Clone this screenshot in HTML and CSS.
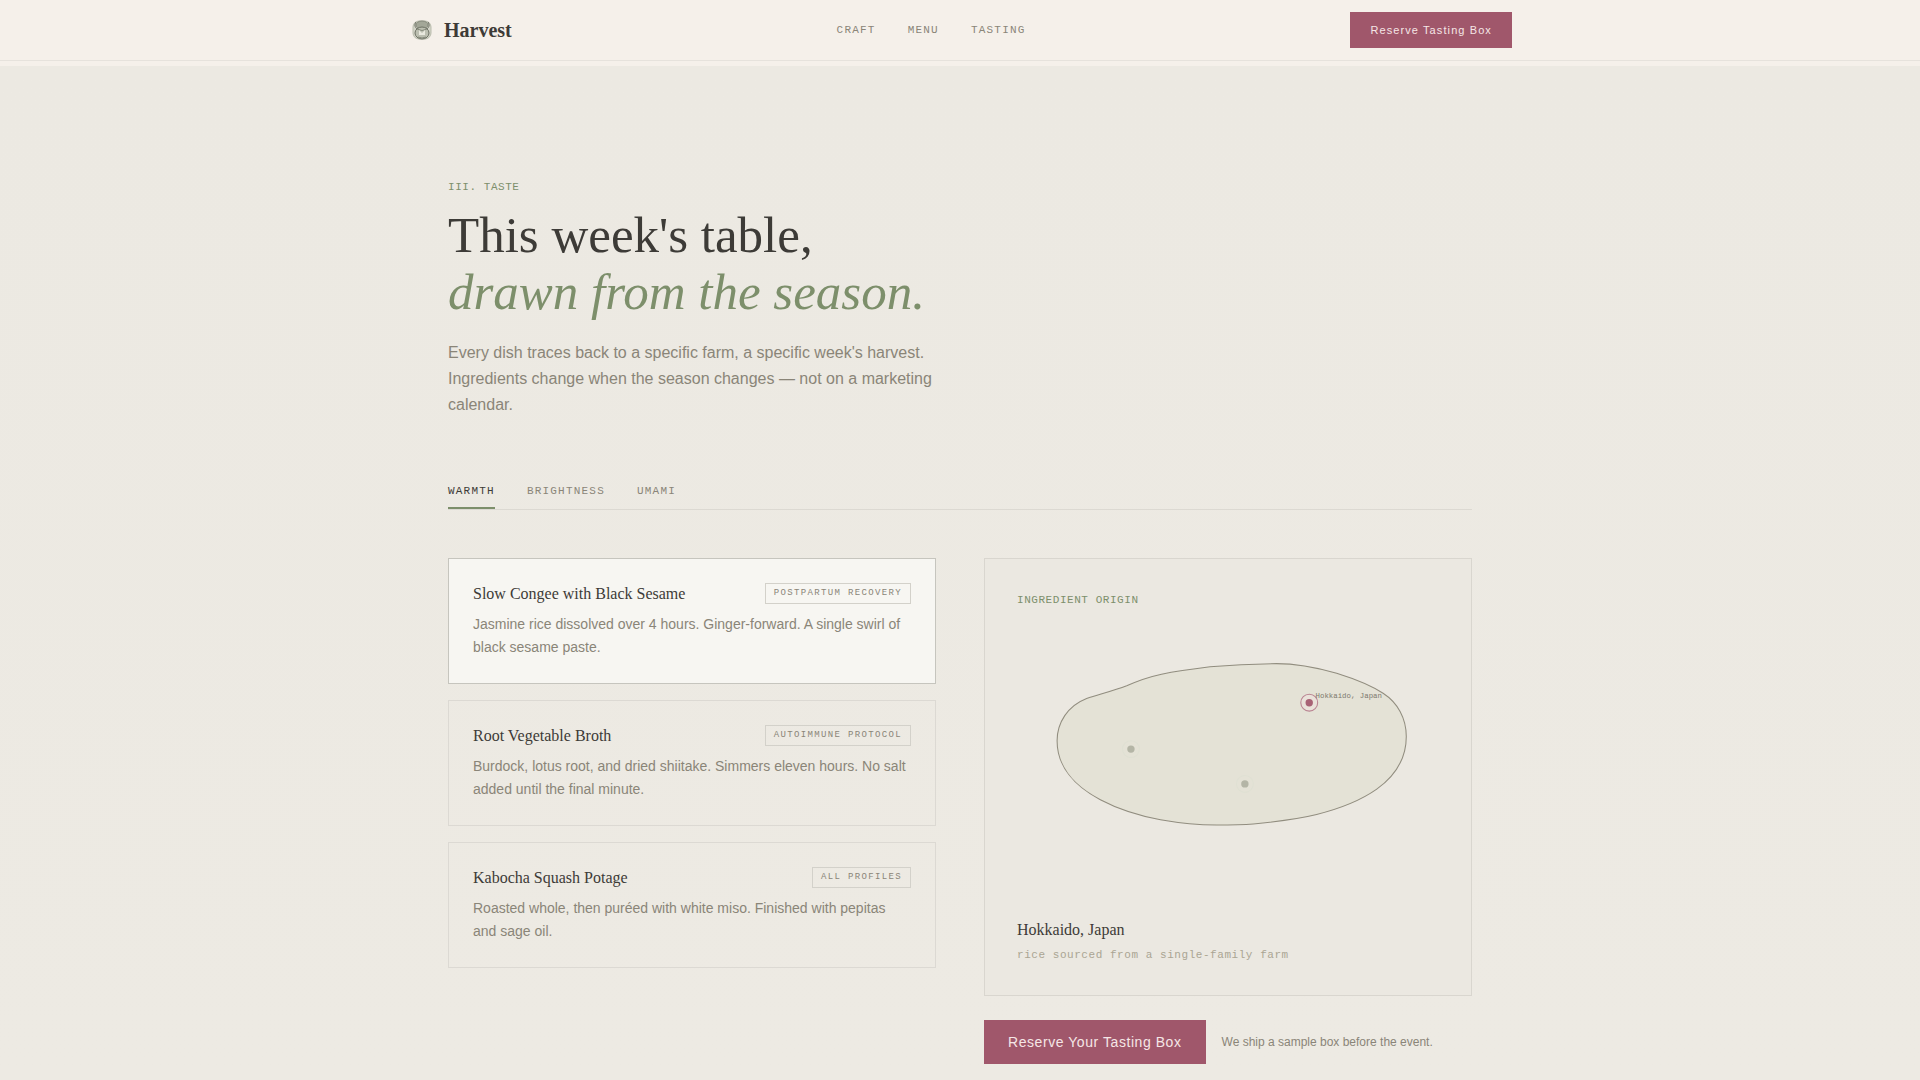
FILE: index.html
```html
<!DOCTYPE html>
<html lang="en">
<head>
<meta charset="UTF-8">
<meta name="viewport" content="width=device-width, initial-scale=1.0">
<title>Harvest</title>
<link rel="stylesheet" href="styles.css">
</head>
<body>

<header class="site-header">
  <div class="header-inner">
    <a class="logo" href="#">
      <svg class="logo-mark" viewBox="0 0 28 28" aria-hidden="true">
        <rect x="5" y="5" width="18" height="18" rx="6" fill="#d3d4c8" stroke="#b9bcad"/>
        <ellipse cx="14" cy="9" rx="6" ry="4" fill="#a3a798" stroke="#85897b"/>
        <path d="M8 6C6 9 7 11 9 13M20 6c2 3 1 5-1 7" fill="none" stroke="#6d7164"/>
        <ellipse cx="14" cy="17" rx="7" ry="6" fill="#bcbfb1" stroke="#6d7164"/>
        <path d="M9 13q5 3 10 0" fill="none" stroke="#85897b"/>
        <path d="M11 14l3 3 3-3v5h-6z" fill="#e9e9df"/>
        <path d="M10 21q4 2 8 0" fill="none" stroke="#85897b"/>
      </svg>
      <span class="logo-name">Harvest</span>
    </a>
    <nav class="site-nav">
      <a href="#craft">Craft</a>
      <a href="#menu">Menu</a>
      <a href="#tasting">Tasting</a>
    </nav>
    <button class="btn btn-small" type="button">Reserve Tasting Box</button>
  </div>
</header>

<main class="taste" id="menu">
  <div class="container">
    <p class="eyebrow">III. Taste</p>
    <h1>This week's table,<br><em>drawn from the season.</em></h1>
    <p class="intro">Every dish traces back to a specific farm, a specific week's harvest. Ingredients change when the season changes — not on a marketing calendar.</p>

    <div class="tabs" role="tablist">
      <button class="tab active" type="button" role="tab" aria-selected="true">Warmth</button>
      <button class="tab" type="button" role="tab" aria-selected="false">Brightness</button>
      <button class="tab" type="button" role="tab" aria-selected="false">Umami</button>
    </div>

    <div class="columns">
      <div class="dishes">
        <article class="dish active">
          <div class="dish-head">
            <h2>Slow Congee with Black Sesame</h2>
            <span class="tag">Postpartum Recovery</span>
          </div>
          <p>Jasmine rice dissolved over 4 hours. Ginger-forward. A single swirl of black sesame paste.</p>
        </article>
        <article class="dish">
          <div class="dish-head">
            <h2>Root Vegetable Broth</h2>
            <span class="tag">Autoimmune Protocol</span>
          </div>
          <p>Burdock, lotus root, and dried shiitake. Simmers eleven hours. No salt added until the final minute.</p>
        </article>
        <article class="dish">
          <div class="dish-head">
            <h2>Kabocha Squash Potage</h2>
            <span class="tag">All Profiles</span>
          </div>
          <p>Roasted whole, then puréed with white miso. Finished with pepitas and sage oil.</p>
        </article>
      </div>

      <div class="side">
        <section class="origin">
          <p class="eyebrow">Ingredient Origin</p>
          <svg class="map" viewBox="0 0 400 249" role="img" aria-label="Map of ingredient origins">
            <path class="land" d="M38 103C38 86 48 70 66 63C78 59 91 56 104 51C115 46 123 43 137 40C152 37 167 35 183 33C204 31 226 30 246 30C267 30 285 34 303 39C319 44 335 50 347 58C361 67 369 82 369 99C369 120 359 136 341 149C324 161 304 168 284 173C264 178 244 180 224 182C212 183 201 183 189 183C171 183 153 181 136 178C115 174 96 168 79 159C54 146 38 127 38 103Z"/>
            <g class="pin">
              <circle class="ring" cx="108" cy="111" r="8"/>
              <circle class="dot" cx="108" cy="111" r="3.5"/>
            </g>
            <g class="pin">
              <circle class="ring" cx="216" cy="144" r="8"/>
              <circle class="dot" cx="216" cy="144" r="3.5"/>
            </g>
            <g class="pin active">
              <circle class="ring" cx="277" cy="67" r="8"/>
              <circle class="dot" cx="277" cy="67" r="3.5"/>
              <text x="283" y="63">Hokkaido, Japan</text>
            </g>
          </svg>
          <h3>Hokkaido, Japan</h3>
          <p class="origin-note">rice sourced from a single-family farm</p>
        </section>
        <div class="cta">
          <button class="btn btn-large" type="button">Reserve Your Tasting Box</button>
          <span class="cta-note">We ship a sample box before the event.</span>
        </div>
      </div>
    </div>
  </div>
</main>

</body>
</html>
```
FILE: styles.css
```css
* { box-sizing: border-box; margin: 0; padding: 0; }

body {
  font-family: "Liberation Sans", Arial, sans-serif;
  background: #f5f0ea;
  color: #3d3b37;
}

h1, h2, h3, .logo-name {
  font-family: "Liberation Serif", "Times New Roman", serif;
  font-weight: 400;
}

/* header */
.site-header {
  border-bottom: 1px solid #e6e2dc;
  margin-bottom: 5px;
}
.header-inner {
  max-width: 1152px;
  height: 60px;
  margin: 0 auto;
  padding: 0 24px;
  display: flex;
  align-items: center;
  justify-content: space-between;
}
.logo { display: flex; align-items: center; gap: 8px; color: #3d3b37; text-decoration: none; }
.logo-mark { width: 28px; height: 28px; }
.logo-name { font-size: 20px; font-weight: 700; }

.site-nav { display: flex; gap: 32px; }
.site-nav a, .tab {
  font-family: "Liberation Mono", "Courier New", monospace;
  font-size: 11px;
  line-height: 19px;
  letter-spacing: 0.11em;
  text-transform: uppercase;
  color: #8a8578;
  text-decoration: none;
}

.btn {
  font-family: inherit;
  color: #f5e6e6;
  background: #a0576b;
  border: none;
  cursor: pointer;
}
.btn-small { height: 36px; padding: 0 20px; font-size: 11px; letter-spacing: 0.1em; }
.btn-large { height: 44px; padding: 0 24px; font-size: 14px; letter-spacing: 0.04em; }

/* taste section */
.taste {
  background: linear-gradient(#ece9e2, #edeae3);
  padding: 112px 0 16px;
}
.container { max-width: 1072px; margin: 0 auto; padding: 0 24px; }

.eyebrow, .origin-note {
  font-family: "Liberation Mono", "Courier New", monospace;
  font-size: 11px;
  line-height: 19px;
  letter-spacing: 0.05em;
}
.eyebrow { color: #7d8f6b; text-transform: uppercase; }

h1 {
  margin-top: 10px;
  font-size: 51px;
  line-height: 57px;
}
h1 em { color: #7d8f6b; }

.intro {
  max-width: 500px;
  margin-top: 19px;
  font-size: 16px;
  line-height: 26px;
  color: #8a8578;
}

.tabs {
  display: flex;
  gap: 32px;
  margin-top: 64px;
  border-bottom: 1px solid #dcd9d2;
}
.tab {
  padding-bottom: 6px;
  background: none;
  border: none;
  border-bottom: 2px solid transparent;
  cursor: pointer;
}
.tab.active { color: #3d3b37; border-bottom-color: #7d8f6b; }

.columns {
  display: grid;
  grid-template-columns: 1fr 1fr;
  gap: 48px;
  margin-top: 48px;
}

/* dishes */
.dishes { display: flex; flex-direction: column; gap: 16px; }
.dish { padding: 24px; border: 1px solid #dcd9d3; }
.dish.active { background: #f7f6f2; border-color: #c6c5be; }
.dish-head {
  display: flex;
  align-items: flex-start;
  justify-content: space-between;
  margin-bottom: 8px;
}
.dish h2 { font-size: 16px; line-height: 22px; }
.dish p { font-size: 14px; line-height: 23px; color: #8a8578; }
.tag {
  padding: 4px 8px;
  border: 1px solid #d3d1ca;
  font-family: "Liberation Mono", "Courier New", monospace;
  font-size: 9px;
  line-height: 11px;
  letter-spacing: 0.15em;
  text-transform: uppercase;
  color: #8a8578;
}

/* origin panel */
.origin {
  padding: 32px 32px 30px;
  background: #ebe8e1;
  border: 1px solid #d9d6cf;
}
.map { display: block; width: 100%; margin: 22px 0; }
.land { fill: #e4e2d6; stroke: #918d7f; }
.pin .dot { fill: #b4b5a6; }
.pin .ring { fill: none; stroke: #dfe0d3; }
.pin.active .dot { fill: #a86275; }
.pin.active .ring { fill: #eae2da; stroke: #b98391; }
.pin text {
  font-family: "Liberation Mono", "Courier New", monospace;
  font-size: 7px;
  fill: #7d796e;
}
.origin h3 { font-size: 16px; line-height: 25px; margin-bottom: 4px; }
.origin-note { color: #aaa593; }

.cta { display: flex; align-items: center; gap: 16px; margin-top: 24px; }
.cta-note { font-size: 12px; color: #8a8578; }
```
